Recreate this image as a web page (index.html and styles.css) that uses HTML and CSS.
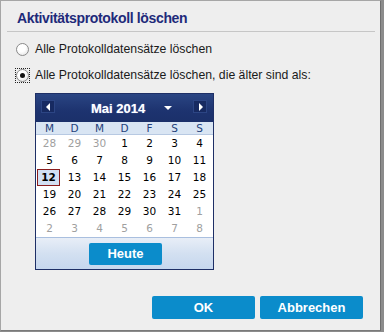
FILE: index.html
```html
<!DOCTYPE html>
<html lang="de">
<head>
    <meta charset="UTF-8">
    <title>Aktivitätsprotokoll löschen</title>
    <link rel="stylesheet" href="styles.css">
</head>
<body>
    <div class="dialog">
        <div class="title">Aktivitätsprotokoll löschen</div>

        <div class="options">
            <label class="option">
                <span class="radio-wrap"><span class="radio"></span></span>
                Alle Protokolldatensätze löschen
            </label>
            <label class="option">
                <span class="radio-wrap focused"><span class="radio checked"></span></span>
                Alle Protokolldatensätze löschen, die älter sind als:
            </label>
        </div>

        <div class="calendar">
            <div class="cal-header">
                <span class="nav prev"></span>
                <span class="month">Mai 2014</span>
                <span class="caret"></span>
                <span class="nav next"></span>
            </div>
            <div class="weekdays">
                <span>M</span><span>D</span><span>M</span><span>D</span><span>F</span><span>S</span><span>S</span>
            </div>
            <div class="days">
                <span class="other">28</span><span class="other">29</span><span class="other">30</span><span>1</span><span>2</span><span>3</span><span>4</span>
                <span>5</span><span>6</span><span>7</span><span>8</span><span>9</span><span>10</span><span>11</span>
                <span class="selected">12</span><span>13</span><span>14</span><span>15</span><span>16</span><span>17</span><span>18</span>
                <span>19</span><span>20</span><span>21</span><span>22</span><span>23</span><span>24</span><span>25</span>
                <span>26</span><span>27</span><span>28</span><span>29</span><span>30</span><span>31</span><span class="other">1</span>
                <span class="other">2</span><span class="other">3</span><span class="other">4</span><span class="other">5</span><span class="other">6</span><span class="other">7</span><span class="other">8</span>
            </div>
            <div class="cal-footer">
                <button class="btn today">Heute</button>
            </div>
        </div>

        <div class="actions">
            <button class="btn action">OK</button>
            <button class="btn action">Abbrechen</button>
        </div>
    </div>
</body>
</html>
```

FILE: styles.css
```css
* {
    margin: 0;
    padding: 0;
    box-sizing: border-box;
}

body {
    background: #8c8c8c;
    font-family: "Liberation Sans", Arial, sans-serif;
    width: 384px;
    height: 332px;
    overflow: hidden;
}

.dialog {
    width: 381px;
    height: 331px;
    background: #eeeeee;
    border: 1px solid #a6a6a6;
    border-right-color: #6e6e6e;
    border-bottom-color: #7a7a7a;
}

.title {
    height: 31px;
    margin: 0 5px 0 6px;
    padding: 8px 0 0 10px;
    font-size: 14px;
    letter-spacing: -0.35px;
    line-height: 18px;
    font-weight: bold;
    color: #1e2a7a;
    border-bottom: 1px solid #c6c6c6;
}

.options {
    padding-top: 4px;
}

.option {
    display: flex;
    align-items: center;
    height: 26px;
    padding-left: 14px;
    font-size: 12.25px;
    color: #1a1a1a;
}

.radio-wrap {
    display: flex;
    align-items: center;
    justify-content: center;
    width: 15px;
    height: 15px;
    margin-right: 5px;
    border: 1px solid transparent;
}

.radio-wrap.focused {
    border: 1px dotted #222;
}

.radio {
    width: 13px;
    height: 13px;
    border-radius: 50%;
    border: 1px solid #8a8a8a;
    background: radial-gradient(circle at 40% 35%, #ffffff 40%, #dcdcdc 100%);
    position: relative;
}

.radio.checked::after {
    content: "";
    position: absolute;
    left: 3px;
    top: 3px;
    width: 5px;
    height: 5px;
    border-radius: 50%;
    background: #111;
}

.calendar {
    width: 179px;
    margin: 5px 0 0 34px;
    border: 1px solid #1e2f66;
    background: #ffffff;
    font-family: "DejaVu Sans", Verdana, sans-serif;
}

.cal-header {
    height: 28px;
    display: flex;
    align-items: center;
    padding: 0 6px 0 5px;
    background: linear-gradient(#2a4583, #1d336f 60%, #1b306a);
}

.nav {
    width: 14px;
    height: 13px;
    background: #172a61;
    border: 1px solid #2c4584;
    position: relative;
    margin-top: -4px;
}

.nav::after {
    content: "";
    position: absolute;
    top: 2px;
    border-top: 4px solid transparent;
    border-bottom: 4px solid transparent;
}

.prev::after {
    left: 4px;
    border-right: 4px solid #fff;
}

.next::after {
    left: 5px;
    border-left: 4px solid #fff;
}

.month {
    margin-left: 36px;
    font-family: "Liberation Sans", Arial, sans-serif;
    font-size: 13px;
    font-weight: bold;
    color: #ffffff;
    text-shadow: 0 0 1px #8fa6d6;
}

.caret {
    margin: 0 auto 0 19px;
    border-left: 4px solid transparent;
    border-right: 4px solid transparent;
    border-top: 4px solid #fff;
}

.weekdays,
.days {
    display: grid;
    grid-template-columns: repeat(7, 1fr);
    padding: 0 1px;
}

.weekdays {
    height: 13px;
    background: #d9e5f3;
    border-bottom: 1px solid #b7c9e2;
    font-size: 10.5px;
    line-height: 12px;
    color: #23407a;
    text-align: center;
}

.days {
    grid-auto-rows: 17px;
    font-size: 10.5px;
    line-height: 17px;
    color: #000;
    text-align: center;
}

.days .other {
    color: #a0a0a0;
}

.days .selected {
    margin: 0 2px 0 0;
    border: 1px solid #8a1c1c;
    background: #d2e0f3;
    font-weight: bold;
    line-height: 15px;
}

.cal-footer {
    height: 32px;
    display: flex;
    align-items: center;
    justify-content: center;
    border-top: 1px solid #a9bfdf;
    background: linear-gradient(#e8eef7, #d3e0f1 50%, #c6d7ee);
}

.btn {
    border: none;
    border-radius: 2px;
    background: #0b8ccb;
    color: #ffffff;
    font-family: "Liberation Sans", Arial, sans-serif;
    font-weight: bold;
}

.today {
    width: 73px;
    height: 22px;
    margin-left: 2px;
    font-size: 13px;
}

.actions {
    display: flex;
    justify-content: flex-end;
    gap: 5px;
    margin: 26px 17px 0 0;
}

.action {
    width: 103px;
    height: 23px;
    font-size: 13px;
}
```
